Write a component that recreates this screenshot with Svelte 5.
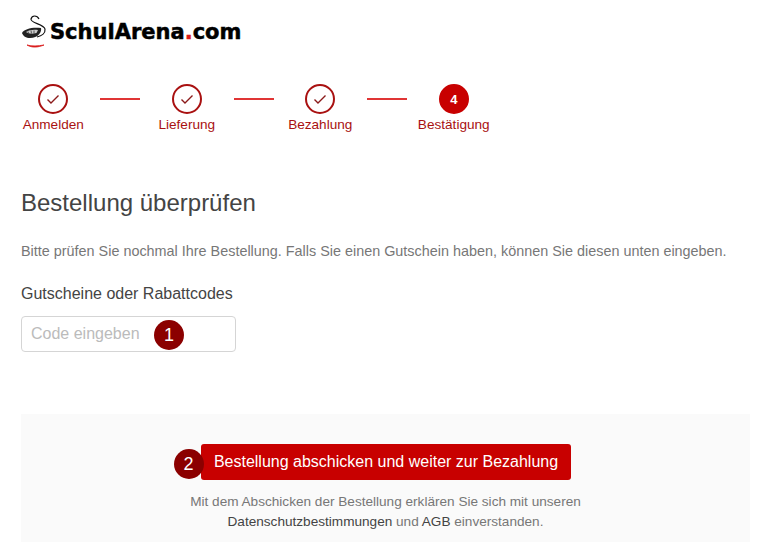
<script>
  const steps = [
    { label: 'Anmelden', done: true },
    { label: 'Lieferung', done: true },
    { label: 'Bezahlung', done: true },
    { label: 'Bestätigung', done: false, num: 4 }
  ];
</script>

<div class="page">
  <header class="logo">
    <svg width="30" height="40" viewBox="0 0 30 40">
      <path d="M19 8 C17 4 12 4 11 8 C10 12 24 13 25 18 C25.500 22 22 25 17 26" fill="none" stroke="#111" stroke-width="1.200"/>
      <path d="M2 22 C4 18 12 16 21 17 C22 21 18 27 10 27 C6 27 3 25 2 22Z" fill="#222"/>
      <path d="M6 21 C9 19 13 18.500 18 19 L16.500 22 C12 23 9 23 6 21Z" fill="#ccc"/>
      <path d="M8 20.500 L8.500 22 M11 19.500 L11.500 22.500 M14 19.500 L14 22.500" stroke="#222" stroke-width=".7"/>
      <path d="M7 34 C12 37 18 36.500 24 34 C18 35 12 35.500 7 34Z" fill="#d91c1c" stroke="#d91c1c" stroke-width=".8"/>
    </svg>
    <span class="brand">SchulArena<span class="dot">.</span>com</span>
  </header>

  <nav class="steps">
    {#each steps as step, i}
      {#if i > 0}<div class="line"></div>{/if}
      <div class="step">
        {#if step.done}
          <div class="circle">
            <svg width="14" height="11" viewBox="0 0 14 11">
              <path d="M1.500 5.500 L5 9 L12.500 1.500" fill="none" stroke="#8b1a1a" stroke-width="1.400"/>
            </svg>
          </div>
        {:else}
          <div class="circle active">{step.num}</div>
        {/if}
        <span class="label">{step.label}</span>
      </div>
    {/each}
  </nav>

  <main class="content">
    <h1>Bestellung überprüfen</h1>
    <p class="intro">Bitte prüfen Sie nochmal Ihre Bestellung. Falls Sie einen Gutschein haben, können Sie diesen unten eingeben.</p>
    <label class="code-label" for="code">Gutscheine oder Rabattcodes</label>
    <div class="code-field">
      <input id="code" type="text" placeholder="Code eingeben" />
      <span class="badge badge-one">1</span>
    </div>

    <section class="panel">
      <div class="submit">
        <span class="badge badge-two">2</span>
        <button>Bestellung abschicken und weiter zur Bezahlung</button>
      </div>
      <p class="terms">
        Mit dem Abschicken der Bestellung erklären Sie sich mit unseren<br />
        <span class="link">Datenschutzbestimmungen</span> und <span class="link">AGB</span> einverstanden.
      </p>
    </section>
  </main>
</div>

<style>
  :global(body) {
    overflow: hidden;
    background: #fff;
  }

  .page {
    height: 542px;
    overflow: hidden;
    font-family: "Liberation Sans", Arial, sans-serif;
  }

  .logo {
    display: flex;
    align-items: flex-start;
    height: 84px;
    padding: 11px 0 0 20px;
    box-sizing: border-box;
  }

  .brand {
    font-family: "DejaVu Sans", sans-serif;
    font-weight: 700;
    font-size: 21px;
    line-height: 40px;
    color: #000;
    margin-top: 1px;
    -webkit-text-stroke: 0.5px #000;
  }

  .dot {
    color: #d91c1c;
    -webkit-text-stroke: 0.5px #d91c1c;
  }

  .steps {
    display: flex;
    padding-left: 6.5px;
  }

  .step {
    width: 93.5px;
    display: flex;
    flex-direction: column;
    align-items: center;
  }

  .line {
    width: 40px;
    height: 2px;
    margin-top: 14px;
    background: #e03535;
  }

  .circle {
    width: 30px;
    height: 30px;
    box-sizing: border-box;
    border: 2px solid #a91111;
    border-radius: 50%;
    display: flex;
    align-items: center;
    justify-content: center;
  }

  .circle.active {
    background: #c80000;
    border-color: #c80000;
    color: #fff;
    font-size: 13px;
    font-weight: 700;
  }

  .label {
    margin-top: 3px;
    font-size: 13.6px;
    line-height: 16px;
    color: #a91111;
    white-space: nowrap;
  }

  .content {
    padding: 0 13px 0 21px;
  }

  h1 {
    margin: 55px 0 0;
    font-size: 24px;
    line-height: 30px;
    font-weight: 400;
    color: #444;
  }

  .intro {
    margin: 24px 0 0;
    font-size: 14.4px;
    line-height: 18px;
    color: #777;
    white-space: nowrap;
  }

  .code-label {
    display: block;
    margin-top: 24px;
    font-size: 16px;
    line-height: 20px;
    color: #444;
  }

  .code-field {
    position: relative;
    width: 215px;
    margin-top: 12px;
  }

  input {
    display: block;
    width: 100%;
    height: 36px;
    box-sizing: border-box;
    padding: 0 9px;
    border: 1px solid #d5d5d5;
    border-radius: 4px;
    font-family: inherit;
    font-size: 16px;
    background: #fff;
  }

  input::placeholder {
    color: #bbb;
    opacity: 1;
  }

  .badge {
    position: absolute;
    width: 30px;
    height: 30px;
    border-radius: 50%;
    background: #8b0000;
    color: #fff;
    font-size: 18px;
    line-height: 30px;
    text-align: center;
  }

  .badge-one {
    left: 133px;
    top: 4px;
  }

  .badge-two {
    left: -27px;
    top: 5px;
  }

  .panel {
    margin-top: 62px;
    height: 128px;
    padding-top: 30px;
    box-sizing: border-box;
    background: #fafafa;
    text-align: center;
  }

  .submit {
    position: relative;
    width: 370px;
    margin: 0 auto;
  }

  button {
    display: block;
    width: 100%;
    height: 36px;
    padding: 0 0 0 1px;
    border: none;
    border-radius: 3px;
    background: #c80000;
    color: #fff;
    font-family: inherit;
    font-size: 16px;
  }

  .terms {
    margin: 12px 0 0;
    font-size: 13.6px;
    line-height: 20px;
    color: #777;
  }

  .link {
    color: #444;
  }
</style>
